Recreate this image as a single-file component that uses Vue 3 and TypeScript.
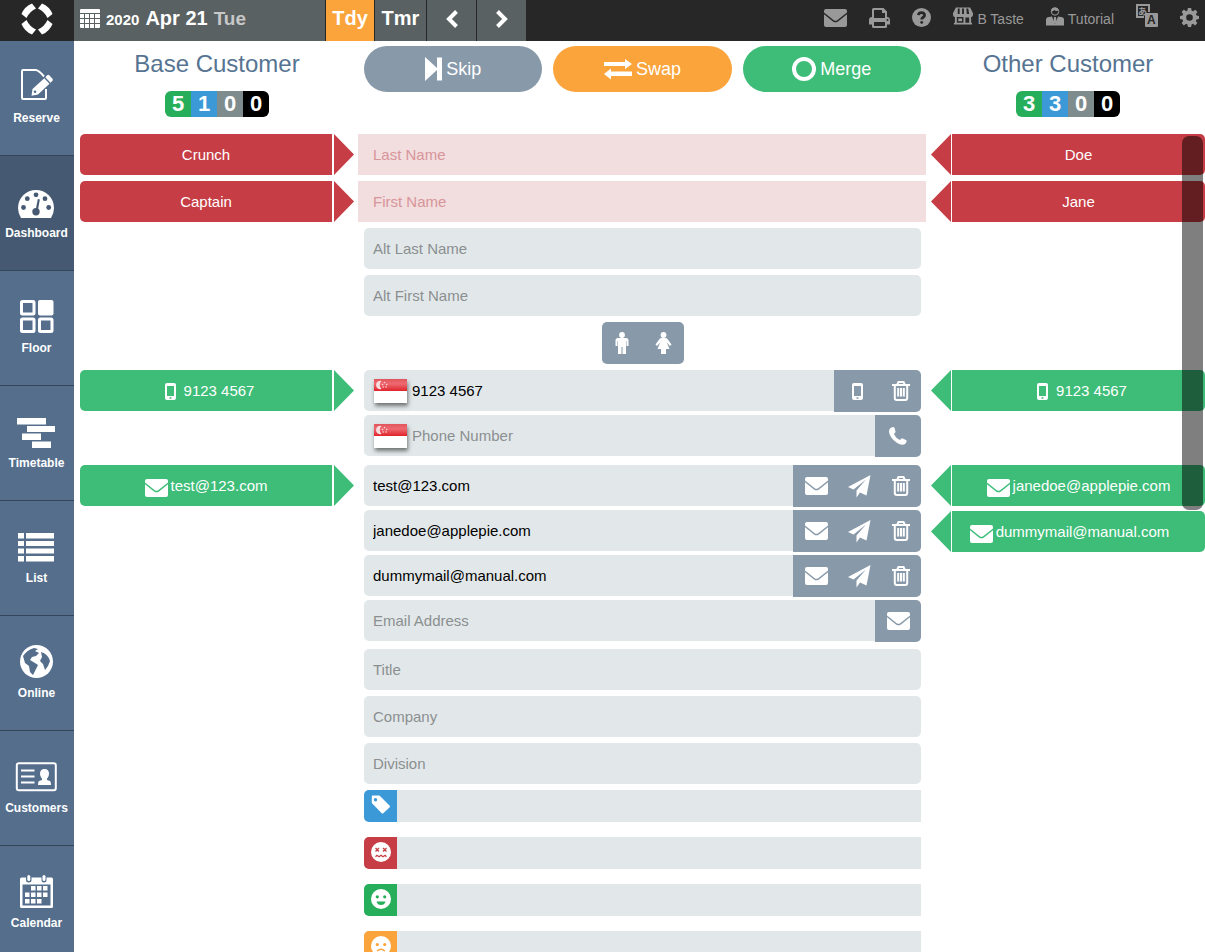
<script setup lang="ts">
import { ref } from 'vue'

interface NavItem {
  label: string
  icon: string
}

interface EmailRow {
  id: string
  value: string
}

interface TagRow {
  id: string
  label: string
  icon: string
  tone: string
}

const nav: NavItem[] = [
  { label: 'Reserve', icon: 'reserve' },
  { label: 'Dashboard', icon: 'dashboard' },
  { label: 'Floor', icon: 'floor' },
  { label: 'Timetable', icon: 'timetable' },
  { label: 'List', icon: 'list' },
  { label: 'Online', icon: 'globe' },
  { label: 'Customers', icon: 'customers' },
  { label: 'Calendar', icon: 'calendar' },
]
const active = ref('Dashboard')

const tones = ['green', 'blue', 'grey', 'black']
const baseCounts = [5, 1, 0, 0]
const otherCounts = [3, 3, 0, 0]

const names = ref([
  { id: 'last', label: 'Last Name', base: 'Crunch', other: 'Doe', value: '' },
  { id: 'first', label: 'First Name', base: 'Captain', other: 'Jane', value: '' },
])
const altNames = ref([
  { id: 'alt-last', label: 'Alt Last Name', value: '' },
  { id: 'alt-first', label: 'Alt First Name', value: '' },
])
const phone = ref('9123 4567')
const newPhone = ref('')
const emails = ref<EmailRow[]>([
  { id: 'email-1', value: 'test@123.com' },
  { id: 'email-2', value: 'janedoe@applepie.com' },
  { id: 'email-3', value: 'dummymail@manual.com' },
])
const newEmail = ref('')
const details = ref([
  { id: 'title', label: 'Title', value: '' },
  { id: 'company', label: 'Company', value: '' },
  { id: 'division', label: 'Division', value: '' },
])
const tags: TagRow[] = [
  { id: 'tags', label: 'Tags', icon: 'tag', tone: 'blue' },
  { id: 'allergies', label: 'Allergies', icon: 'sick', tone: 'red' },
  { id: 'likes', label: 'Likes', icon: 'happy', tone: 'green' },
  { id: 'dislikes', label: 'Dislikes', icon: 'sad', tone: 'orange' },
]

function removeEmail(id: string) {
  emails.value = emails.value.filter((e) => e.id !== id)
}
</script>

<template>
  <svg class="sprite" aria-hidden="true">
    <symbol id="i-logo" viewBox="0 0 32 32">
      <g id="logo-piece">
        <path d="M0.500 11Q3.500 3.500 11 0.500L15 5.500Q8.500 8.500 5.500 15Z" />
      </g>
      <use href="#logo-piece" transform="rotate(90 16 16)" />
      <use href="#logo-piece" transform="rotate(180 16 16)" />
      <use href="#logo-piece" transform="rotate(270 16 16)" />
    </symbol>
    <symbol id="i-grid" viewBox="0 0 20 19">
      <path d="M1 0H19Q20 0 20 1V4H0V1Q0 0 1 0ZM0 5H4V9H0ZM5 5H9V9H5ZM10 5H14V9H10ZM15 5H20V9H15ZM0 10H4V14H0ZM5 10H9V14H5ZM10 10H14V14H10ZM15 10H20V14H15ZM0 15H4V19H1Q0 19 0 18ZM5 15H9V19H5ZM10 15H14V19H10ZM15 15H20V18Q20 19 19 19H15Z" />
    </symbol>
    <symbol id="i-prev" viewBox="0 0 14 20"><path class="line thick" d="M11.500 2.500L4 10l7.500 7.500" /></symbol>
    <symbol id="i-next" viewBox="0 0 14 20"><path class="line thick" d="M2.500 2.500L10 10l-7.500 7.500" /></symbol>
    <symbol id="i-mail" viewBox="0 0 23 18">
      <path d="M0 2Q0 0 2 0H21Q23 0 23 2V3.500L13.200 11.200Q11.500 12.300 9.800 11.200L0 3.500Z" />
      <path d="M0 5.200l9 7.200q2.500 1.700 5 0L23 5.200V16q0 2-2 2H2q-2 0-2-2z" />
    </symbol>
    <symbol id="i-print" viewBox="0 0 21 20">
      <path fill-rule="evenodd" d="M3 9V1.500Q3 0 4.500 0H14.500L18 3.500V9Q21 9 21 12V16.500H18V18.500Q18 20 16.500 20H4.500Q3 20 3 18.500V16.500H0V12Q0 9 3 9ZM5 2V10H16V5H13V2ZM5 14V18H16V14ZM18.500 11A1 1 0 1 0 18.500 13A1 1 0 1 0 18.500 11Z" />
    </symbol>
    <symbol id="i-help" viewBox="0 0 20 20">
      <circle cx="10" cy="10" r="10" />
      <path class="cutline help" d="M6.800 7.500Q7 4.800 10 4.800T13.200 7.500Q13.200 9 11.500 10Q10.200 10.800 10.200 12.200" />
      <circle class="cut" cx="10.200" cy="15.200" r="1.500" />
    </symbol>
    <symbol id="i-store" viewBox="0 0 21 19">
      <path fill-rule="evenodd" d="M3 0H18L21 6V8Q21 10 19 10V16H20V18H1V16H2V10Q0 10 0 8V6ZM4 10V16H11V10ZM13 10.500V16H17V10.500Z" />
      <path class="cut" d="M5 1H7V7H5ZM9.500 1H11.500V7H9.500ZM14 1H16L17 7H14.500Z" />
      <path d="M5.500 11.500H9.500V14.500H5.500Z" />
    </symbol>
    <symbol id="i-person" viewBox="0 0 18 19">
      <circle class="line head" cx="9" cy="4.500" r="3.700" />
      <path d="M5 4.500Q5 0.500 9 0.500Q12 0.500 12.800 3.500Q9.500 4.500 8.500 3Q7 4.500 5 4.500ZM0 18.500V13Q0 10 3 10L6 9.500L9 17L12 9.500L15 10Q18 10 18 13V18.500Z" />
      <path d="M8 10H10L10.500 15L9 17L7.500 15Z" />
    </symbol>
    <symbol id="i-gear" viewBox="0 0 20 20">
      <path fill-rule="evenodd" d="M8.300 0H11.700L12.200 2.700L13.800 3.400L16.100 1.800L18.400 4.100L16.800 6.400L17.400 8L20 8.400V11.700L17.300 12.200L16.700 13.700L18.300 15.900L15.900 18.300L13.700 16.700L12.200 17.300L11.700 20H8.400L7.900 17.300L6.300 16.700L4.100 18.300L1.700 15.900L3.300 13.700L2.700 12.200L0 11.700V8.400L2.700 7.900L3.300 6.400L1.700 4.100L4.100 1.700L6.300 3.300L7.800 2.700ZM10 6.500A3.500 3.500 0 1 0 10 13.500A3.500 3.500 0 1 0 10 6.500Z" />
    </symbol>

    <symbol id="i-reserve" viewBox="0 0 44 36">
      <path class="line doc" d="M31 20V29Q31 30 30 30H8Q7 30 7 29V2Q7 1 8 1H21Q24 1.500 29 7.500" />
      <path d="M32.500 6Q33.500 5.500 34.500 6.500L37.500 9.800Q38.300 11 37.300 12L35.500 13.700L30.300 8.200Z" />
      <path fill-rule="evenodd" d="M29.300 9.200L34.500 14.700L23 25.500L16.500 26.800L17.500 20ZM20 21.500A1.300 1.300 0 1 0 20 24.100A1.300 1.300 0 1 0 20 21.500Z" />
    </symbol>
    <symbol id="i-dashboard" viewBox="0 0 44 36">
      <path d="M6 34Q3 29 3 24A18 18 0 0 1 39 24Q39 29 36 34Z" />
      <g class="cut">
        <circle cx="8.500" cy="23.500" r="2.400" /><circle cx="12.300" cy="14.700" r="2.400" />
        <circle cx="21" cy="10.800" r="2.400" /><circle cx="30" cy="14.700" r="2.400" />
        <circle cx="33.700" cy="23.500" r="2.400" /><circle cx="21" cy="27.700" r="3.700" />
        <path d="M22.800 15L24.800 15.500L22.800 27H20.500Z" />
      </g>
    </symbol>
    <symbol id="i-floor" viewBox="0 0 44 36">
      <rect class="line floor" x="6.500" y="2.500" width="12.500" height="12.500" rx="1" />
      <rect x="23" y="1" width="15.500" height="15.500" rx="2" />
      <rect class="line floor" x="6.500" y="20" width="12.500" height="12.500" rx="1" />
      <rect class="line floor" x="24.500" y="20" width="12.500" height="12.500" rx="1" />
    </symbol>
    <symbol id="i-timetable" viewBox="0 0 44 36">
      <path d="M2 4H31V10.500H2ZM12 12H40V18H12ZM7 19.500H26V26H7ZM17 27.500H36V34H17Z" />
    </symbol>
    <symbol id="i-list" viewBox="0 0 44 36">
      <path d="M3 4H9V9.500H3ZM11 4H39V9.500H11ZM3 12H9V17H3ZM11 12H39V17H11ZM3 19.500H9V24.500H3ZM11 19.500H39V24.500H11ZM3 27H9V32.500H3ZM11 27H39V32.500H11Z" />
    </symbol>
    <symbol id="i-globe" viewBox="0 0 44 36">
      <circle cx="21.500" cy="17.500" r="16.500" />
      <path class="cut" d="M8 12Q12 6 19 4L23 5L20 7L24 9L21 12L17 13L15 16L20 19L23 21L21 25L18 31L15 28L14 22L10 19ZM26 8Q33 10 35 17L33 22L30 26L28 20L25 17L27 13Z" />
    </symbol>
    <symbol id="i-customers" viewBox="0 0 44 36">
      <rect class="line doc" x="1.800" y="4.300" width="39" height="27" rx="2" />
      <path d="M6 10.500H19.500V12.500H6ZM6 16.500H19.500V18.500H6ZM6 22.500H19.500V24.500H6Z" />
      <path d="M29.500 10C32.500 10 34 12 34 14.500C34 17 33 18.500 32 19.500V21L35 22Q36 22.500 36 26H23Q23 22.500 24 22L27 21V19.500C26 18.500 25 17 25 14.500C25 12 26.500 10 29.500 10Z" />
    </symbol>
    <symbol id="i-calendar" viewBox="0 0 44 36">
      <path fill-rule="evenodd" d="M5 5Q5 3.500 6.500 3.500H11V6Q11 8.500 13.800 8.500T16.500 6V3.500H26.500V6Q26.500 8.500 29 8.500T31.500 6V3.500H36.500Q38 3.500 38 5V32.500Q38 34 36.500 34H6.500Q5 34 5 32.500ZM7.500 10.500V31.500H35.500V10.500Z" />
      <rect x="12.300" y="1" width="3" height="6" rx="1.500" /><rect x="27.500" y="1" width="3" height="6" rx="1.500" />
      <path d="M16 12H20.500V16.500H16ZM22 12H26.500V16.500H22ZM28 12H32.500V16.500H28ZM10 18.500H14.500V23H10ZM16 18.500H20.500V23H16ZM22 18.500H26.500V23H22ZM28 18.500H32.500V23H28ZM10 25H14.500V29.500H10ZM16 25H20.500V29.500H16ZM22 25H26.500V29.500H22Z" />
    </symbol>

    <symbol id="i-skip" viewBox="0 0 17 24"><path d="M0 0L12 11V0.500H17V23.500H12V13L0 24Z" /></symbol>
    <symbol id="i-swap" viewBox="0 0 28 22">
      <path d="M0 4H21V1L28 6L21 11V8H0ZM28 13.500H7V10.500L0 16L7 21.500V18H28Z" />
    </symbol>
    <symbol id="i-ring" viewBox="0 0 24 24"><circle class="line thick" cx="12" cy="12" r="10" /></symbol>
    <symbol id="i-man" viewBox="0 0 14 22">
      <circle cx="7" cy="3" r="2.900" />
      <path d="M3 6H11Q13.500 6 13.500 8.500V14H11.500V9H11V22H7.500V15H6.500V22H3V9H2.500V14H0.500V8.500Q0.500 6 3 6Z" />
    </symbol>
    <symbol id="i-woman" viewBox="0 0 17 22">
      <circle cx="8.500" cy="3" r="2.900" />
      <path d="M6.500 6H10.500Q11.800 6 12.500 7L16.500 12.500L15 14L11.800 10.500L14.500 17H11V22H6V17H2.500L5.200 10.500L2 14L0.500 12.500L4.500 7Q5.200 6 6.500 6Z" />
    </symbol>
    <symbol id="i-mobile" viewBox="0 0 11 17">
      <path fill-rule="evenodd" d="M2 0H9Q11 0 11 2V15Q11 17 9 17H2Q0 17 0 15V2Q0 0 2 0ZM2 3V13H9V3ZM4.500 14.300V15.700H6.500V14.300Z" />
    </symbol>
    <symbol id="i-trash" viewBox="0 0 18 20">
      <path class="line trash" d="M0 4H18M5 4L6.500 1H11.500L13 4M2.800 4V17Q2.800 19 4.800 19H13.200Q15.200 19 15.200 17V4M6.200 7V15.500M9 7V15.500M11.800 7V15.500" />
    </symbol>
    <symbol id="i-plane" viewBox="0 0 23 23">
      <path d="M22.500 0L0 12L5.500 14.500L18 4.500L8.500 15.500V22.500L12 17.500L18.500 20.500Z" />
    </symbol>
    <symbol id="i-phone" viewBox="0 0 18 18">
      <path d="M1.500 1L4 0Q5 0 5.500 1L6.500 4.500Q6.700 5.500 5.500 6.300Q4.800 7 5.500 8Q7 11 10 12.500Q11 13.200 11.800 12.300Q12.800 11 13.700 11.400L17 13Q18 13.700 17.500 14.800Q16.500 18 13 17.700Q8.500 17.200 4.500 13Q0.500 9 0 4.500Q0 2 1.500 1Z" />
    </symbol>
    <symbol id="i-tag" viewBox="0 0 20 20">
      <path fill-rule="evenodd" d="M1.500 0.500H8.500L18.500 10.500Q19.500 11.500 18.500 12.500L12.500 18Q11.500 19 10.500 18L0.800 8V1.500Q0.800 0.500 1.500 0.500ZM4.500 3A1.700 1.700 0 1 0 4.500 6.400A1.700 1.700 0 1 0 4.500 3Z" />
    </symbol>
    <symbol id="i-sick" viewBox="0 0 20 20">
      <circle cx="10" cy="10" r="10" />
      <path class="cutline" d="M4.500 6L8 9.500M8 6L4.500 9.500M12 6L15.500 9.500M15.500 6L12 9.500M4.500 14.800L6 13.300L8 14.800L10 13.300L12 14.800L14 13.300L15.500 14.800" />
    </symbol>
    <symbol id="i-happy" viewBox="0 0 20 20">
      <circle cx="10" cy="10" r="10" />
      <circle class="cut" cx="6.300" cy="7.800" r="1.600" /><circle class="cut" cx="13.700" cy="7.800" r="1.600" />
      <path class="cut" d="M5.500 12.500H14.500Q13.500 16 10 16T5.500 12.500Z" />
    </symbol>
    <symbol id="i-sad" viewBox="0 0 20 20">
      <circle cx="10" cy="10" r="10" />
      <circle class="cut" cx="6.300" cy="8.500" r="1.600" /><circle class="cut" cx="13.700" cy="8.500" r="1.600" />
      <path class="cutline" d="M6 15Q10 11.500 14 15" />
    </symbol>
    <symbol id="i-flag" viewBox="0 0 33 24">
      <linearGradient id="flag-red" x1="0" y1="0" x2="0" y2="1">
        <stop offset="0" stop-color="#e0555c" /><stop offset="0.400" stop-color="#ee6a70" /><stop offset="1" stop-color="#e0222b" />
      </linearGradient>
      <rect width="33" height="24" fill="#fff" />
      <rect width="33" height="12" fill="url(#flag-red)" />
      <path fill="#fbdcde" d="M7.500 2A4.200 4.200 0 1 0 7.500 10A5.500 5.500 0 0 1 7.500 2Z" />
      <g fill="#fbdcde"><circle cx="10.500" cy="3.500" r="0.800" /><circle cx="8.500" cy="5.500" r="0.800" /><circle cx="12.700" cy="5.500" r="0.800" /><circle cx="9.200" cy="8" r="0.800" /><circle cx="12" cy="8" r="0.800" /></g>
    </symbol>
  </svg>

  <div class="app">
    <header class="topbar">
      <a href="#" class="logo" aria-label="Home"><svg width="32" height="32"><use href="#i-logo" /></svg></a>
      <button type="button" class="date">
        <svg width="20" height="19"><use href="#i-grid" /></svg>
        <span class="year">2020</span>
        <span class="day">Apr 21</span>
        <span class="weekday">Tue</span>
      </button>
      <button type="button" class="step today">Tdy</button>
      <button type="button" class="step tomorrow">Tmr</button>
      <button type="button" class="step" aria-label="Previous day"><svg width="14" height="20"><use href="#i-prev" /></svg></button>
      <button type="button" class="step" aria-label="Next day"><svg width="14" height="20"><use href="#i-next" /></svg></button>
      <nav class="tools" aria-label="Account">
        <a href="#" aria-label="Messages"><svg width="23" height="18"><use href="#i-mail" /></svg></a>
        <a href="#" aria-label="Print"><svg width="21" height="20"><use href="#i-print" /></svg></a>
        <a href="#" aria-label="Help"><svg width="19" height="19"><use href="#i-help" /></svg></a>
        <a href="#" class="named"><svg width="20" height="19"><use href="#i-store" /></svg><span>B Taste</span></a>
        <a href="#" class="named"><svg width="18" height="19"><use href="#i-person" /></svg><span>Tutorial</span></a>
        <a href="#" class="lang" aria-label="Language">
          <svg width="22" height="23" viewBox="0 0 22 23">
            <path class="line thin" d="M8 13H1V1H13V8" />
            <text x="2" y="11" class="kana">あ</text>
            <rect x="9" y="9" width="13" height="14" rx="1" />
            <text x="11" y="20" class="latin">A</text>
          </svg>
        </a>
        <a href="#" aria-label="Settings"><svg width="19" height="19"><use href="#i-gear" /></svg></a>
      </nav>
    </header>

    <div class="body">
      <nav class="sidebar" aria-label="Main">
        <a
          v-for="item in nav"
          :key="item.label"
          href="#"
          :class="{ active: item.label === active }"
          @click.prevent="active = item.label"
        >
          <svg width="44" height="36"><use :href="'#i-' + item.icon" /></svg>
          <span>{{ item.label }}</span>
        </a>
      </nav>

      <main>
        <section class="row heading">
          <div class="who">
            <h2>Base Customer</h2>
            <div class="counts">
              <span v-for="(n, i) in baseCounts" :key="i" :class="tones[i]">{{ n }}</span>
            </div>
          </div>
          <div class="commands">
            <button type="button" class="slate"><svg width="17" height="24"><use href="#i-skip" /></svg>Skip</button>
            <button type="button" class="orange"><svg width="28" height="22"><use href="#i-swap" /></svg>Swap</button>
            <button type="button" class="mint"><svg width="24" height="24"><use href="#i-ring" /></svg>Merge</button>
          </div>
          <div class="who">
            <h2>Other Customer</h2>
            <div class="counts">
              <span v-for="(n, i) in otherCounts" :key="i" :class="tones[i]">{{ n }}</span>
            </div>
          </div>
        </section>

        <form class="merge" @submit.prevent>
          <div v-for="f in names" :key="f.id" class="row">
            <button type="button" class="chip base red"><span>{{ f.base }}</span></button>
            <div class="field missing"><input :id="f.id" v-model="f.value" type="text" :aria-label="f.label" :placeholder="f.label" /></div>
            <button type="button" class="chip other red"><span>{{ f.other }}</span></button>
          </div>
          <div v-for="f in altNames" :key="f.id" class="row">
            <div class="field middle"><input :id="f.id" v-model="f.value" type="text" :aria-label="f.label" :placeholder="f.label" /></div>
          </div>
          <div class="row">
            <div class="gender middle">
              <button type="button" aria-label="Male"><svg width="14" height="22"><use href="#i-man" /></svg></button>
              <button type="button" aria-label="Female"><svg width="17" height="22"><use href="#i-woman" /></svg></button>
            </div>
          </div>

          <div class="row phones">
            <div class="side">
              <button type="button" class="chip base mint"><span class="tel"><svg width="11" height="17"><use href="#i-mobile" /></svg>9123 4567</span></button>
            </div>
            <div class="stack">
              <div class="line-row">
                <div class="field with-flag">
                  <button type="button" class="flag" aria-label="Country: Singapore"><svg width="33" height="24"><use href="#i-flag" /></svg></button>
                  <input v-model="phone" type="tel" aria-label="Phone number 1" />
                </div>
                <div class="actions">
                  <button type="button" class="wide" aria-label="Mobile"><svg width="11" height="17"><use href="#i-mobile" /></svg></button>
                  <button type="button" aria-label="Delete phone"><svg width="18" height="20"><use href="#i-trash" /></svg></button>
                </div>
              </div>
              <div class="line-row">
                <div class="field with-flag">
                  <button type="button" class="flag" aria-label="Country: Singapore"><svg width="33" height="24"><use href="#i-flag" /></svg></button>
                  <input v-model="newPhone" type="tel" aria-label="Phone Number" placeholder="Phone Number" />
                </div>
                <div class="actions">
                  <button type="button" class="wide" aria-label="Add phone"><svg width="18" height="18"><use href="#i-phone" /></svg></button>
                </div>
              </div>
            </div>
            <div class="side">
              <button type="button" class="chip other mint"><span class="tel"><svg width="11" height="17"><use href="#i-mobile" /></svg>9123 4567</span></button>
            </div>
          </div>

          <div class="row emails">
            <div class="side">
              <button type="button" class="chip base mint"><span class="mail"><svg width="23" height="18"><use href="#i-mail" /></svg>test@123.com</span></button>
            </div>
            <div class="stack">
              <div v-for="e in emails" :key="e.id" class="line-row">
                <div class="field"><input :id="e.id" v-model="e.value" type="email" aria-label="Email" /></div>
                <div class="actions">
                  <button type="button" class="wide" aria-label="Email type"><svg width="23" height="18"><use href="#i-mail" /></svg></button>
                  <button type="button" aria-label="Send email"><svg width="23" height="23"><use href="#i-plane" /></svg></button>
                  <button type="button" aria-label="Delete email" @click="removeEmail(e.id)"><svg width="18" height="20"><use href="#i-trash" /></svg></button>
                </div>
              </div>
              <div class="line-row">
                <div class="field"><input v-model="newEmail" type="email" aria-label="Email Address" placeholder="Email Address" /></div>
                <div class="actions">
                  <button type="button" class="wide" aria-label="Add email"><svg width="23" height="18"><use href="#i-mail" /></svg></button>
                </div>
              </div>
            </div>
            <div class="side">
              <button type="button" class="chip other mint"><span class="mail"><svg width="23" height="18"><use href="#i-mail" /></svg>janedoe@applepie.com</span></button>
              <button type="button" class="chip other extra mint"><span class="mail"><svg width="23" height="18"><use href="#i-mail" /></svg>dummymail@manual.com</span></button>
            </div>
          </div>

          <div v-for="f in details" :key="f.id" class="row">
            <div class="field middle"><input :id="f.id" v-model="f.value" type="text" :aria-label="f.label" :placeholder="f.label" /></div>
          </div>

          <div v-for="t in tags" :key="t.id" class="row tag-row">
            <div class="tag-field middle">
              <button type="button" :class="t.tone" :aria-label="'Add ' + t.label"><svg width="20" height="20"><use :href="'#i-' + t.icon" /></svg></button>
              <input type="text" :aria-label="t.label" />
            </div>
          </div>
        </form>
        <div class="scroll-thumb"></div>
      </main>
    </div>
  </div>
</template>

<style>
html,
body {
  margin: 0;
  background: #fff;
}
</style>

<style scoped>
.sprite {
  position: absolute;
  width: 0;
  height: 0;
}
.cut {
  fill: var(--cut);
}
.line {
  fill: none;
  stroke: currentColor;
  stroke-width: 2;
}
.thin {
  stroke-width: 2;
}
.head {
  stroke-width: 1;
}
.doc {
  stroke-width: 2;
}
.floor {
  stroke-width: 3;
}
.thick {
  stroke-width: 4;
}
.cutline {
  fill: none;
  stroke: var(--cut);
  stroke-width: 1.3;
}
.help {
  stroke-width: 3;
}
.kana {
  font: 700 9px 'Noto Sans CJK JP', sans-serif;
}
.latin {
  font: 700 12px 'Liberation Sans', sans-serif;
  fill: var(--cut);
}

.app {
  display: flex;
  flex-direction: column;
  height: 100vh;
  overflow: hidden;
  color: #000;
  font-family: 'Liberation Sans', Arial, sans-serif;
  font-size: 15px;
}
svg {
  display: block;
  flex: none;
  fill: currentColor;
}
button {
  margin: 0;
  padding: 0;
  border: 0;
  background: none;
  color: #fff;
  font: inherit;
  cursor: pointer;
}
a {
  color: inherit;
  text-decoration: none;
}
.red { background: #c63d45; --cut: #c63d45; }
.mint { background: #3dbd78; --cut: #3dbd78; }
.orange { background: #faa43b; --cut: #faa43b; }
.slate { background: #889aaa; --cut: #889aaa; }
.green { background: #27ae5a; --cut: #27ae5a; }
.blue { background: #3c99d8; --cut: #3c99d8; }
.grey { background: #7f8c8d; }
.black { background: #000; }

.topbar {
  display: flex;
  flex: none;
  height: 41px;
  background: #272727;
  color: #fff;
  --cut: #272727;
}
.logo {
  display: flex;
  justify-content: center;
  width: 74px;
  padding-top: 3px;
  box-sizing: border-box;
}
.date,
.step {
  display: flex;
  align-items: center;
  padding-bottom: 4px;
  background: #5a6162;
  font-size: 20px;
  font-weight: 700;
}
.date {
  gap: 6px;
  width: 251px;
  padding-left: 6px;
}
.year {
  font-size: 15px;
  padding-top: 2px;
}
.weekday {
  font-size: 19px;
  color: #c8c8c8;
}
.step {
  justify-content: center;
  width: 50px;
  border-left: 1px solid #272727;
}
.today {
  width: 49px;
  background: #faa43b;
}
.tomorrow {
  width: 52px;
}
.tools {
  display: flex;
  flex: 1;
  align-items: center;
  justify-content: flex-end;
  gap: 22px;
  padding: 0 6px 6px 0;
  color: #999;
  font-size: 14px;
}
.named {
  display: flex;
  align-items: center;
  gap: 4px;
}
.named svg {
  margin-bottom: 3px;
}
.named span {
  padding-top: 3px;
}
.lang svg {
  margin-bottom: 4px;
}

.body {
  display: flex;
  flex: 1;
  min-height: 0;
}
.sidebar {
  flex: none;
  width: 74px;
  overflow: hidden;
  background: #546e8c;
}
.sidebar a {
  display: flex;
  flex-direction: column;
  align-items: center;
  gap: 6px;
  box-sizing: border-box;
  height: 115px;
  padding: 28px 1px 0 0;
  border-bottom: 1px solid #34465a;
  color: #fff;
  font-size: 12px;
  font-weight: 700;
  line-height: 14px;
  --cut: #546e8c;
}
.sidebar a.active {
  background: #455a72;
  --cut: #455a72;
}

main {
  position: relative;
  flex: 1;
  min-width: 0;
  overflow: hidden;
  padding: 5px 0 0 6px;
}
.row {
  display: grid;
  grid-template-columns: 274fr 557fr 274fr;
  column-gap: 10px;
}
.row > * {
  min-width: 0;
}
.middle {
  grid-column: 2;
}
.heading {
  margin-bottom: 17px;
}
.who {
  display: flex;
  flex-direction: column;
  align-items: center;
}
h2 {
  margin: 4px 0 13px;
  color: #567492;
  font-size: 24px;
  font-weight: 400;
  line-height: 28px;
}
.counts {
  display: flex;
  overflow: hidden;
  border-radius: 6px;
}
.counts span {
  width: 26px;
  color: #fff;
  font-size: 22px;
  font-weight: 700;
  line-height: 26px;
  text-align: center;
}
.commands {
  display: grid;
  grid-template-columns: repeat(3, 1fr);
  gap: 11px;
  align-self: start;
}
.commands button {
  display: flex;
  align-items: center;
  justify-content: center;
  gap: 4px;
  height: 46px;
  border-radius: 23px;
  font-size: 18px;
}

.merge {
  display: flex;
  flex-direction: column;
  gap: 6px;
}
.chip {
  position: relative;
  display: flex;
  align-items: center;
  justify-content: center;
  height: 41px;
}
.chip.base {
  margin-right: 22px;
  border-radius: 5px 0 0 5px;
}
.chip.other {
  margin-left: 21px;
  border-radius: 0 5px 5px 0;
}
.chip::after {
  content: '';
  position: absolute;
  top: 0;
  width: 20px;
  height: 41px;
  background: inherit;
}
.chip.base::after {
  left: 100%;
  margin-left: 2px;
  clip-path: polygon(0 0, 100% 50%, 0 100%);
}
.chip.other::after {
  right: 100%;
  margin-right: 1px;
  clip-path: polygon(100% 0, 0 50%, 100% 100%);
}
.chip.extra {
  padding-right: 18px;
}
.chip span {
  display: flex;
  align-items: center;
}
.tel {
  gap: 8px;
  padding-left: 7px;
}
.tel svg {
  margin-top: 2px;
}
.mail {
  gap: 3px;
}
.mail svg {
  margin-top: 4px;
}
.side {
  display: flex;
  flex-direction: column;
  gap: 5px;
}

.field {
  display: flex;
  height: 41px;
  border-radius: 5px;
  background: #e2e8ea;
}
input {
  flex: 1;
  min-width: 0;
  padding: 0 9px;
  border: 0;
  outline: 0;
  background: transparent;
  color: #000;
  font: inherit;
}
input::placeholder {
  color: #8b8f90;
  opacity: 1;
}
.missing {
  margin: 0 -5px 0 -6px;
  border-radius: 0;
  background: #f2dddf;
}
.missing input {
  padding: 0 15px;
}
.missing input::placeholder {
  color: #d79599;
}
.gender {
  display: flex;
  justify-self: center;
  border-radius: 5px;
  background: #889aaa;
}
.gender button {
  display: grid;
  place-items: center;
  width: 41px;
  height: 42px;
}
.phones {
  margin-bottom: 2px;
}
.emails {
  margin-bottom: 1px;
}
.stack {
  display: flex;
  flex-direction: column;
  gap: 3px;
}
.line-row {
  display: flex;
  height: 42px;
}
.line-row .field {
  flex: 1;
  min-width: 0;
  border-radius: 5px 0 0 5px;
}
.with-flag input {
  padding-left: 5px;
}
.flag {
  padding-left: 10px;
}
.flag svg {
  box-shadow: 1px 3px 4px rgba(0, 0, 0, 0.5);
}
.actions {
  display: flex;
  border-radius: 0 5px 5px 0;
  background: #889aaa;
}
.actions button {
  display: grid;
  place-items: center;
  width: 41px;
}
.actions .wide {
  width: 46px;
}
.tag-row {
  margin-bottom: 9px;
}
.tag-field {
  display: flex;
  height: 32px;
  background: #e2e8ea;
  border-radius: 5px 0 0 5px;
}
.tag-field button {
  display: grid;
  place-items: center;
  width: 33px;
  padding-bottom: 2px;
  border-radius: 5px 0 0 5px;
}
.scroll-thumb {
  position: absolute;
  top: 95px;
  right: 2px;
  width: 21px;
  height: 374px;
  border-radius: 7px;
  background: rgba(0, 0, 0, 0.5);
}
</style>
